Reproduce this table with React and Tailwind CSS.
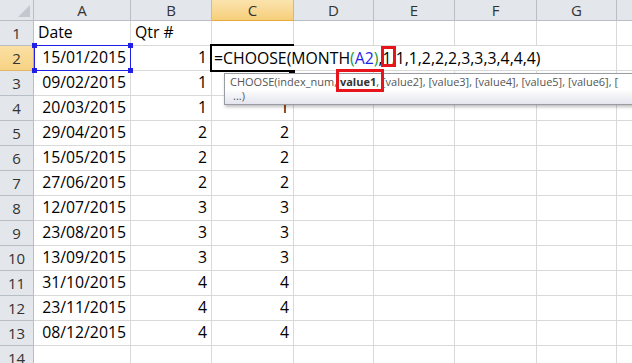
import React from "react";

const colW = ["w-[97px]", "w-[81px]", "w-[82px]", "w-[80px]", "w-[81px]", "w-[82px]", "w-[80px]", "w-[40px]"];
const letters = ["A", "B", "C", "D", "E", "F", "G", ""];

const rows = [
  ["Date", "Qtr #", ""],
  ["15/01/2015", "1", ""],
  ["09/02/2015", "1", "1"],
  ["20/03/2015", "1", "1"],
  ["29/04/2015", "2", "2"],
  ["15/05/2015", "2", "2"],
  ["27/06/2015", "2", "2"],
  ["12/07/2015", "3", "3"],
  ["23/08/2015", "3", "3"],
  ["13/09/2015", "3", "3"],
  ["31/10/2015", "4", "4"],
  ["23/11/2015", "4", "4"],
  ["08/12/2015", "4", "4"],
  ["", "", ""],
];

function HeaderRow() {
  return (
    <div className="flex h-[21px] shrink-0">
      <div className="relative w-[34px] shrink-0 border-r border-b border-[#b8bdc6] bg-[#e3e6eb]">
        <div className="absolute right-[3px] bottom-[3px] w-0 h-0 border-l-[12px] border-l-transparent border-b-[12px] border-b-[#c3c8cf]" />
      </div>
      {letters.map((l, i) => (
        <div
          key={i}
          className={
            colW[i] +
            " shrink-0 flex items-center justify-center border-r border-b text-[15px] leading-none pt-[1px] " +
            (i === 2
              ? "bg-gradient-to-b from-[#fbe3ad] to-[#f6cf7a] border-b-[#e8a93c] border-r-[#e2b567] text-[#333]"
              : "bg-[#e3e6eb] border-[#b8bdc6] text-[#333]")
          }
        >
          {l}
        </div>
      ))}
    </div>
  );
}

function DataRow({ n, cells }) {
  const active = n === 2;
  return (
    <div className="flex h-[25px] shrink-0">
      <div
        className={
          "w-[34px] shrink-0 flex items-end justify-center pb-[4px] border-r border-b text-[15px] leading-none text-[#333] " +
          (active
            ? "bg-gradient-to-b from-[#fbe0a4] to-[#f7d282] border-r-[#e8a93c] border-b-[#e2b567]"
            : "bg-[#e3e6eb] border-[#b8bdc6]")
        }
      >
        {n}
      </div>
      {colW.map((w, i) => {
        const v = i < 3 ? cells[i] : "";
        const leftAlign = n === 1;
        return (
          <div
            key={i}
            className={
              w +
              " shrink-0 flex items-end pb-[4px] border-r border-b border-[#d9d9d9] text-[15.8px] leading-none text-black " +
              (leftAlign ? "justify-start pl-[4px]" : "justify-end pr-[4px]")
            }
          >
            {v}
          </div>
        );
      })}
    </div>
  );
}

export default function App() {
  return (
    <div
      className="relative w-[632px] h-[363px] overflow-hidden bg-white"
      style={{ fontFamily: '"Open Sans", "Liberation Sans", sans-serif' }}
    >
      <div className="flex flex-col">
        <HeaderRow />
        {rows.map((r, i) => (
          <DataRow key={i} n={i + 1} cells={r} />
        ))}
      </div>

      {/* range highlight for the A2 reference */}
      <div className="absolute left-[34px] top-[45px] w-[97px] h-[26px] border border-[#1f1fe8]" />
      <div className="absolute left-[32px] top-[43px] w-[5px] h-[5px] bg-[#1f1fe8]" />
      <div className="absolute left-[128px] top-[43px] w-[5px] h-[5px] bg-[#1f1fe8]" />
      <div className="absolute left-[32px] top-[68px] w-[5px] h-[5px] bg-[#1f1fe8]" />
      <div className="absolute left-[128px] top-[68px] w-[5px] h-[5px] bg-[#1f1fe8]" />

      {/* in-cell editor on C2 */}
      <div className="absolute left-[210px] top-[44px] w-[84px] h-[28px] border-2 border-black" />
      <div className="absolute left-[289px] top-[69px] w-[6px] h-[5px] bg-black" />
      <div className="absolute left-[212px] top-[46px] w-[404px] h-[24px] bg-white flex items-end pb-[3px] pl-[2px] text-[15.8px] leading-none text-black whitespace-nowrap">
        <span>=CHOOSE(MONTH</span>
        <span className="text-[#1d9a3c]">(</span>
        <span className="text-[#1f1fe8]">A2</span>
        <span className="text-[#1d9a3c]">)</span>
        <span>,1,1,1,2,2,2,3,3,3,4,4,4)</span>
      </div>
      <div className="absolute left-[381px] top-[46px] w-[15px] h-[21px] border-[3px] border-[#e8141b]" />

      {/* argument tooltip */}
      <div className="absolute left-[224px] top-[73px] w-[420px] h-[32px] border border-[#9a9ca3] bg-gradient-to-b from-white via-white to-[#e4e5ee] shadow-[1px_2px_3px_rgba(0,0,0,0.25)] text-[11px] leading-[14px] text-[#555] whitespace-nowrap pl-[5px] pt-[1px]">
        <div>
          CHOOSE(index_num, <span className="font-bold text-[#333]">value1</span>, [value2], [value3], [value4], [value5], [value6], [
        </div>
        <div className="pl-[3px]">...)</div>
      </div>
      <div className="absolute left-[336px] top-[69px] w-[48px] h-[23px] border-[3px] border-[#e8141b]" />
    </div>
  );
}
